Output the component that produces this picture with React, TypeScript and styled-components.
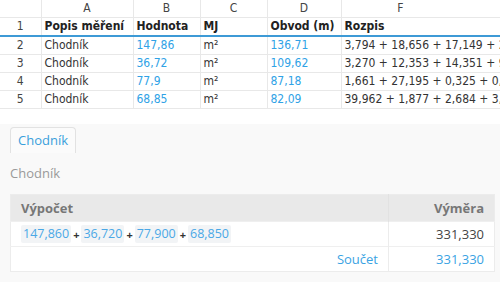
import React from 'react';
import styled, { createGlobalStyle } from 'styled-components';

const GlobalStyle = createGlobalStyle`
  html, body {
    margin: 0;
    padding: 0;
    background: #fff;
  }
  body {
    width: 500px;
    height: 282px;
    overflow: hidden;
  }
`;

const rows = [
  { n: 2, popis: 'Chodník', hodnota: '147,86', mj: 'm²', obvod: '136,71', rozpis: '3,794 + 18,656 + 17,149 + 21,004' },
  { n: 3, popis: 'Chodník', hodnota: '36,72', mj: 'm²', obvod: '109,62', rozpis: '3,270 + 12,353 + 14,351 + 9,008' },
  { n: 4, popis: 'Chodník', hodnota: '77,9', mj: 'm²', obvod: '87,18', rozpis: '1,661 + 27,195 + 0,325 + 0,001' },
  { n: 5, popis: 'Chodník', hodnota: '68,85', mj: 'm²', obvod: '82,09', rozpis: '39,962 + 1,877 + 2,684 + 3,220' },
];

const parts = ['147,860', '36,720', '77,900', '68,850'];

const App = () => {
  return (
    <>
      <GlobalStyle />
      <Page>
        <Sheet>
          <colgroup>
            <col style={{ width: 41 }} />
            <col style={{ width: 92 }} />
            <col style={{ width: 67 }} />
            <col style={{ width: 67 }} />
            <col style={{ width: 74 }} />
            <col style={{ width: 159 }} />
          </colgroup>
          <thead>
            <tr>
              <Letter />
              <Letter>A</Letter>
              <Letter>B</Letter>
              <Letter>C</Letter>
              <Letter>D</Letter>
              <Letter $shift>F</Letter>
            </tr>
          </thead>
          <tbody>
            <HeadRow>
              <RowNum>1</RowNum>
              <Cell $bold>Popis měření</Cell>
              <Cell $bold>Hodnota</Cell>
              <Cell $bold>MJ</Cell>
              <Cell $bold>Obvod (m)</Cell>
              <Cell $bold>Rozpis</Cell>
            </HeadRow>
            {rows.map((r) => (
              <tr key={r.n}>
                <RowNum>{r.n}</RowNum>
                <Cell>{r.popis}</Cell>
                <Cell $blue>{r.hodnota}</Cell>
                <Cell>{r.mj}</Cell>
                <Cell $blue>{r.obvod}</Cell>
                <Cell>{r.rozpis}</Cell>
              </tr>
            ))}
          </tbody>
        </Sheet>

        <Panel>
          <Tabs>
            <Tab>Chodník</Tab>
          </Tabs>
          <Caption>Chodník</Caption>
          <Calc>
            <thead>
              <tr>
                <CalcHead>Výpočet</CalcHead>
                <CalcHead $right>Výměra</CalcHead>
              </tr>
            </thead>
            <tbody>
              <tr>
                <CalcCell>
                  <Formula>
                    {parts.map((p, i) => (
                      <React.Fragment key={p}>
                        {i > 0 && <Plus>+</Plus>}
                        <Chip>{p}</Chip>
                      </React.Fragment>
                    ))}
                  </Formula>
                </CalcCell>
                <CalcCell $right>331,330</CalcCell>
              </tr>
              <tr>
                <CalcCell $right $blue>Součet</CalcCell>
                <CalcCell $right $blue>331,330</CalcCell>
              </tr>
            </tbody>
          </Calc>
        </Panel>
      </Page>
    </>
  );
};

export default App;

const Page = styled.div`
  width: 500px;
  height: 282px;
  display: flex;
  flex-direction: column;
  overflow: hidden;
`;

const Sheet = styled.table`
  table-layout: fixed;
  border-collapse: collapse;
  width: 500px;
  font-family: 'DejaVu Sans Condensed', 'DejaVu Sans', sans-serif;
  font-size: 12px;
  color: #333;
  td,
  th {
    height: 17px;
    padding: 0 3px;
    border-right: 1px solid #e8e8e8;
    border-bottom: 1px solid #e8e8e8;
    white-space: nowrap;
    overflow: visible;
    line-height: 17px;
  }
  td:last-child,
  th:last-child {
    border-right: 0;
  }
`;

const Letter = styled.th<{ $shift?: boolean }>`
  font-weight: normal;
  text-align: center;
  color: #444;
  height: 16px !important;
  padding-right: ${(p) => (p.$shift ? '44px' : '3px')} !important;
`;

const HeadRow = styled.tr`
  td {
    border-bottom: 2px solid #3d9ad6;
  }
`;

const RowNum = styled.td`
  text-align: center;
  color: #444;
`;

const Cell = styled.td<{ $bold?: boolean; $blue?: boolean }>`
  font-weight: ${(p) => (p.$bold ? 'bold' : 'normal')};
  color: ${(p) => (p.$blue ? '#2fa2e6' : p.$bold ? '#222' : '#333')};
`;

const Panel = styled.div`
  margin-top: 15px;
  flex: 1;
  background: #f9f9f9;
  padding: 3px 5px 0 10px;
  font-family: 'Open Sans', 'Noto Sans', sans-serif;
  font-size: 13px;
`;

const Tabs = styled.div`
  display: flex;
`;

const Tab = styled.div`
  width: 66px;
  height: 26px;
  box-sizing: border-box;
  border: 1px solid #e2e2e2;
  border-bottom: 0;
  border-radius: 4px 4px 0 0;
  background: #fbfbfb;
  color: #3a9fdc;
  text-align: center;
  line-height: 25px;
`;

const Caption = styled.div`
  color: #999;
  margin: 10px 0 0;
  height: 31px;
  line-height: 20px;
`;

const Calc = styled.table`
  width: 485px;
  border-collapse: collapse;
  table-layout: fixed;
  border: 1px solid #ececec;
`;

const CalcHead = styled.th<{ $right?: boolean }>`
  background: #e9e9e9;
  color: #777;
  font-weight: bold;
  height: 26px;
  padding: 0 10px;
  text-align: ${(p) => (p.$right ? 'right' : 'left')};
  width: ${(p) => (p.$right ? '85px' : 'auto')};
  border-left: ${(p) => (p.$right ? '1px solid #e2e2e2' : '0')};
`;

const CalcCell = styled.td<{ $right?: boolean; $blue?: boolean }>`
  background: #fff;
  height: 24px;
  padding: 0 10px;
  text-align: ${(p) => (p.$right ? 'right' : 'left')};
  color: ${(p) => (p.$blue ? '#3aa3e3' : '#444')};
  border-top: 1px solid #efefef;
  & + & {
    border-left: 1px solid #ececec;
  }
`;

const Formula = styled.div`
  display: flex;
  align-items: center;
  gap: 2px;
`;

const Chip = styled.span`
  background: #f2f4f6;
  color: #4aa8e6;
  border-radius: 2px;
  padding: 0 2px;
  line-height: 18px;
  font-size: 12.5px;
`;

const Plus = styled.span`
  color: #333;
  font-weight: bold;
  font-size: 11px;
`;
